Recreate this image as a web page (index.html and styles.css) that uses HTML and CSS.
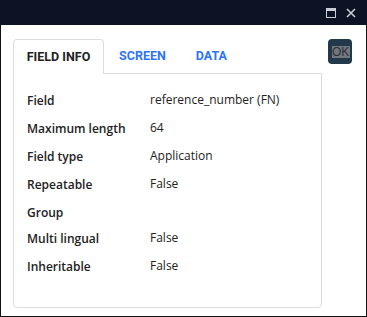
FILE: index.html
```html
<!DOCTYPE html>
<html lang="en">
<head>
    <meta charset="UTF-8">
    <title>Field info</title>
    <link rel="stylesheet" href="styles.css">
</head>
<body>
    <div class="window">
        <div class="titlebar">
            <span class="tb-btn">
                <svg width="10" height="10" viewBox="0 0 10 10"><rect x="0.5" y="0.5" width="9" height="9" fill="none" stroke="#c9ced6" stroke-width="1"/><rect x="0" y="0" width="10" height="3" fill="#c9ced6"/></svg>
            </span>
            <span class="tb-btn">
                <svg width="10" height="10" viewBox="0 0 10 10"><path d="M1 1 L9 9 M9 1 L1 9" stroke="#c9ced6" stroke-width="1.6"/></svg>
            </span>
        </div>
        <div class="content">
            <div class="tabs-area">
                <div class="tabs">
                    <div class="tab active">FIELD INFO</div>
                    <div class="tab">SCREEN</div>
                    <div class="tab">DATA</div>
                </div>
                <div class="panel">
                    <div class="row"><span class="label">Field</span><span class="value">reference_number (FN)</span></div>
                    <div class="row"><span class="label">Maximum length</span><span class="value">64</span></div>
                    <div class="row"><span class="label">Field type</span><span class="value">Application</span></div>
                    <div class="row"><span class="label">Repeatable</span><span class="value">False</span></div>
                    <div class="row short"><span class="label">Group</span><span class="value"></span></div>
                    <div class="row"><span class="label">Multi lingual</span><span class="value">False</span></div>
                    <div class="row"><span class="label">Inheritable</span><span class="value">False</span></div>
                </div>
            </div>
            <div class="side">
                <button class="ok-btn"><span class="ok-inner">OK</span></button>
            </div>
        </div>
    </div>
</body>
</html>
```

FILE: styles.css
```css
body {
    margin: 0;
    padding: 0;
    background-color: #fff;
    font-family: "Open Sans", "Noto Sans", sans-serif;
}

.window {
    width: 367px;
    height: 317px;
    box-sizing: border-box;
    border: 1px solid #111;
    border-top: none;
    background-color: #fff;
    display: flex;
    flex-direction: column;
}

.titlebar {
    height: 25px;
    background-color: #0b1324;
    display: flex;
    justify-content: flex-end;
    align-items: center;
    gap: 10px;
    padding-right: 11px;
    margin: 0 -1px;
}

.tb-btn {
    display: flex;
    width: 10px;
    height: 10px;
}

.content {
    display: flex;
    padding: 14px 0 0 12px;
}

.tabs-area {
    width: 309px;
}

.tabs {
    display: flex;
    height: 34px;
}

.tab {
    font-family: Roboto, "Liberation Sans", sans-serif;
    font-weight: bold;
    font-size: 12.5px;
    color: #2f74f5;
    padding: 0 15px;
    line-height: 34px;
}

.tab.active {
    color: #222;
    border: 1px solid #ddd;
    border-bottom: none;
    border-radius: 4px 4px 0 0;
    background-color: #fff;
    width: 91px;
    box-sizing: border-box;
    text-align: center;
    padding: 0;
    height: 35px;
    position: relative;
    z-index: 1;
}

.panel {
    border: 1px solid #ddd;
    border-radius: 0 0 4px 4px;
    height: 235px;
    box-sizing: border-box;
    padding: 17px 0 0 13px;
}

.row {
    display: flex;
    height: 28px;
    font-size: 12px;
    color: #222;
}

.row.short {
    height: 26px;
}

.label {
    width: 123px;
    font-weight: 600;
    line-height: 19px;
}

.value {
    line-height: 17px;
}

.side {
    padding-left: 6px;
}

.ok-btn {
    width: 24px;
    height: 25px;
    border: none;
    border-radius: 4px;
    background-color: #22384b;
    padding: 0 2px 0 4px;
    display: flex;
    align-items: center;
    overflow: hidden;
}

.ok-inner {
    display: block;
    background-color: #72777d;
    color: #2c2f33;
    font-family: "Liberation Sans", sans-serif;
    font-size: 12px;
    line-height: 12px;
    width: 18px;
    overflow: hidden;
    white-space: nowrap;
    text-align: left;
}
```
